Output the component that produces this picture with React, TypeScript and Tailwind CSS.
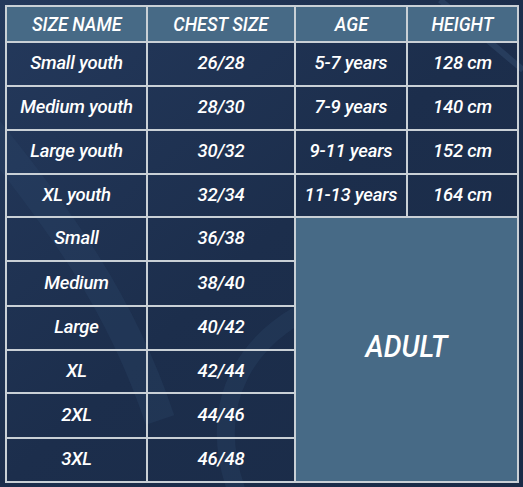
import React from "react";

const rows: { name: string; chest: string; age?: string; height?: string; h: string }[] = [
  { name: "Small youth", chest: "26/28", age: "5-7 years", height: "128 cm", h: "h-[44px]" },
  { name: "Medium youth", chest: "28/30", age: "7-9 years", height: "140 cm", h: "h-[44px]" },
  { name: "Large youth", chest: "30/32", age: "9-11 years", height: "152 cm", h: "h-[44px]" },
  { name: "XL youth", chest: "32/34", age: "11-13 years", height: "164 cm", h: "h-[43px]" },
];

const adult: { name: string; chest: string; h: string }[] = [
  { name: "Small", chest: "36/38", h: "h-[44px]" },
  { name: "Medium", chest: "38/40", h: "h-[45px]" },
  { name: "Large", chest: "40/42", h: "h-[44px]" },
  { name: "XL", chest: "42/44", h: "h-[43px]" },
  { name: "2XL", chest: "44/46", h: "h-[45px]" },
  { name: "3XL", chest: "46/48", h: "h-[44px]" },
];

const cell =
  "flex items-center justify-center border-r-2 border-b-2 border-[#c9d0d6] text-white italic font-medium text-[18.5px] tracking-[-0.2px] [font-family:Roboto,'Liberation_Sans',Arial,sans-serif]";
const head =
  "flex items-center justify-center border-r-2 border-b-2 border-[#c9d0d6] bg-[#476a86] text-white italic font-medium text-[20px] [font-family:Roboto,'Liberation_Sans',Arial,sans-serif]";

function H({ children, className }: { children: React.ReactNode; className: string }) {
  return (
    <div className={className}>
      <span className="inline-block whitespace-nowrap scale-x-[0.9]">{children}</span>
    </div>
  );
}

export default function App() {
  return (
    <div className="relative w-[523px] h-[487px] overflow-hidden bg-[#1d2f4e]">
      <svg className="absolute inset-0" width="523" height="487" viewBox="0 0 523 487">
        <defs>
          <linearGradient id="g1" x1="0" y1="0" x2="1" y2="1">
            <stop offset="0" stopColor="#24395c" />
            <stop offset="0.5" stopColor="#1c2e4c" />
            <stop offset="1" stopColor="#1a2b47" />
          </linearGradient>
        </defs>
        <rect width="523" height="487" fill="url(#g1)" />
        <path d="M-20 120 C 60 220, 120 300, 160 420" stroke="#2c4468" strokeWidth="30" fill="none" opacity="0.35" />
        <path d="M240 500 C 200 400, 250 330, 330 300" stroke="#2c4468" strokeWidth="18" fill="none" opacity="0.35" />
        <path d="M440 0 L 523 70" stroke="#3a5578" strokeWidth="6" fill="none" opacity="0.4" />
      </svg>
      <div className="relative ml-[5px] mt-[5px] w-[514px] border-l-2 border-t-2 border-[#c9d0d6]">
        <div className="grid grid-cols-[141px_148px_112px_111px]">
          <H className={`${head} h-[36px]`}>SIZE NAME</H>
          <H className={`${head} h-[36px]`}>CHEST SIZE</H>
          <H className={`${head} h-[36px]`}>AGE</H>
          <H className={`${head} h-[36px]`}>HEIGHT</H>
          {rows.map((r) => (
            <React.Fragment key={r.name}>
              <div className={`${cell} ${r.h}`}>{r.name}</div>
              <div className={`${cell} ${r.h}`}>{r.chest}</div>
              <div className={`${cell} ${r.h}`}>{r.age}</div>
              <div className={`${cell} ${r.h}`}>{r.height}</div>
            </React.Fragment>
          ))}
        </div>
        <div className="flex">
          <div className="flex flex-col w-[289px]">
            {adult.map((r) => (
              <div key={r.name} className="flex">
                <div className={`${cell} ${r.h} w-[141px]`}>{r.name}</div>
                <div className={`${cell} ${r.h} w-[148px]`}>{r.chest}</div>
              </div>
            ))}
          </div>
          <div className="flex-1 flex items-center justify-center bg-[#476a86] border-r-2 border-b-2 border-[#c9d0d6] pb-[8px] text-white italic font-medium text-[32px] [font-family:Roboto,'Liberation_Sans',Arial,sans-serif]">
            <span className="inline-block scale-x-[0.88]">ADULT</span>
          </div>
        </div>
      </div>
    </div>
  );
}
